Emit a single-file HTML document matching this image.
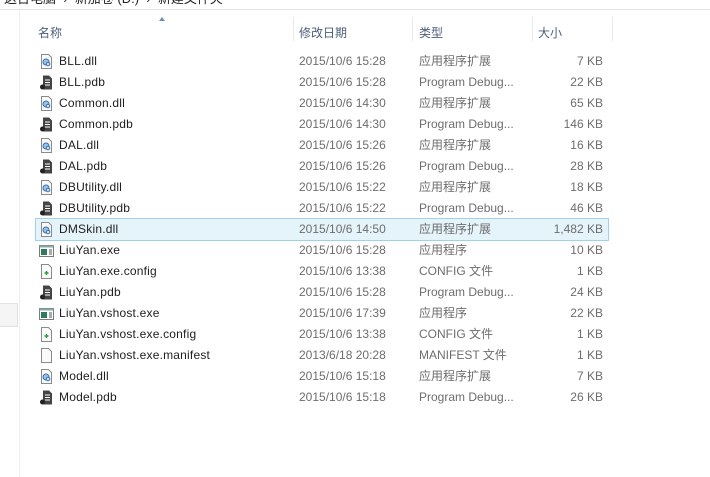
<!DOCTYPE html>
<html><head><meta charset="utf-8"><style>
body{margin:0;width:710px;height:477px;background:#fff;position:relative;overflow:hidden;font-family:"Liberation Sans","Noto Sans CJK SC",sans-serif;font-size:12px;}
.crumb{position:absolute;left:4px;top:-12px;color:#222;font-size:13px;white-space:nowrap}
.topline{position:absolute;left:0;top:9px;width:710px;height:1px;background:#e3e3e3}
.vline{position:absolute;left:19px;top:10px;width:1px;height:467px;background:#efefef}
.gbox{position:absolute;left:0;top:303px;width:17px;height:22px;background:#f5f5f5;border:1px solid #e2e2e2;border-left:none}
.h{position:absolute;top:24px;color:#4c607a;font-size:12px}
.sep{position:absolute;top:17px;width:1px;height:24px;background:#e5eaf0}
.r{position:absolute;left:0;height:21px;width:710px;line-height:21px}
.r span{position:absolute;white-space:nowrap}
.n{left:59px;color:#1e1e1e;letter-spacing:.2px}
.d{left:299px;color:#6d6d6d}
.t{left:419px;color:#6d6d6d}
.s{right:107px;color:#6d6d6d}
.ic{position:absolute;left:40px;top:3px;width:13px;height:15px}
.sel{position:absolute;left:35px;top:218px;width:572px;height:21px;background:#e5f3fb;border:1px solid #9fd0f0}
.arrow{position:absolute;left:159px;top:17px;width:0;height:0;border-left:3px solid transparent;border-right:3px solid transparent;border-bottom:4px solid #6d8fb0}
</style></head><body>
<div class="crumb">这台电脑 &nbsp;›&nbsp; 新加卷 (D:) &nbsp;›&nbsp; 新建文件夹</div>
<div class="topline"></div>
<div class="vline"></div>
<div class="gbox"></div>
<div class="arrow"></div>
<div class="h" style="left:38px">名称</div>
<div class="sep" style="left:293px"></div>
<div class="h" style="left:299px">修改日期</div>
<div class="sep" style="left:412px"></div>
<div class="h" style="left:419px">类型</div>
<div class="sep" style="left:532px"></div>
<div class="h" style="left:538px">大小</div>
<div class="sep" style="left:612px"></div>
<div class="sel"></div>

<svg width="0" height="0" style="position:absolute">
<defs>
<symbol id="dll" viewBox="0 0 13 15"><path d="M1.5 .5h7l3 3v11h-10z" fill="#fafafa" stroke="#8a8a8a"/><circle cx="6" cy="8" r="3" fill="#9cc3e6" stroke="#3a6fb0"/><circle cx="8" cy="10" r="1.8" fill="#c8dff3" stroke="#3a6fb0"/></symbol>
<symbol id="pdb" viewBox="0 0 13 15"><path d="M3 .5h6l3 3v11h-9z" fill="#444"/><path d="M5 5h5M5 7.5h5M5 10h5" stroke="#fff"/><circle cx="2.5" cy="12" r="2.5" fill="#222"/></symbol>
<symbol id="exe" viewBox="0 0 15 15"><rect x=".5" y="2.5" width="14" height="11" fill="#fff" stroke="#7a7a7a"/><rect x=".5" y="2.5" width="14" height="2" fill="#8aa"/><rect x="2" y="6" width="6" height="6" fill="#2f7a5a"/><path d="M10 7h3M10 9h3M10 11h3" stroke="#555"/></symbol>
<symbol id="cfg" viewBox="0 0 13 15"><path d="M1.5 .5h7l3 3v11h-10z" fill="#fafafa" stroke="#8a8a8a"/><path d="M6.5 7v4M4.5 9h4" stroke="#2a9a3a" stroke-width="1.4"/></symbol>
<symbol id="man" viewBox="0 0 13 15"><path d="M1.5 .5h7l3 3v11h-10z" fill="#fafafa" stroke="#8a8a8a"/></symbol>
</defs></svg>

<div class="r" style="top:51px"><svg class="ic"><use href="#dll"/></svg><span class="n">BLL.dll</span><span class="d">2015/10/6 15:28</span><span class="t">应用程序扩展</span><span class="s">7 KB</span></div>
<div class="r" style="top:72px"><svg class="ic"><use href="#pdb"/></svg><span class="n">BLL.pdb</span><span class="d">2015/10/6 15:28</span><span class="t">Program Debug...</span><span class="s">22 KB</span></div>
<div class="r" style="top:93px"><svg class="ic"><use href="#dll"/></svg><span class="n">Common.dll</span><span class="d">2015/10/6 14:30</span><span class="t">应用程序扩展</span><span class="s">65 KB</span></div>
<div class="r" style="top:114px"><svg class="ic"><use href="#pdb"/></svg><span class="n">Common.pdb</span><span class="d">2015/10/6 14:30</span><span class="t">Program Debug...</span><span class="s">146 KB</span></div>
<div class="r" style="top:135px"><svg class="ic"><use href="#dll"/></svg><span class="n">DAL.dll</span><span class="d">2015/10/6 15:26</span><span class="t">应用程序扩展</span><span class="s">16 KB</span></div>
<div class="r" style="top:156px"><svg class="ic"><use href="#pdb"/></svg><span class="n">DAL.pdb</span><span class="d">2015/10/6 15:26</span><span class="t">Program Debug...</span><span class="s">28 KB</span></div>
<div class="r" style="top:177px"><svg class="ic"><use href="#dll"/></svg><span class="n">DBUtility.dll</span><span class="d">2015/10/6 15:22</span><span class="t">应用程序扩展</span><span class="s">18 KB</span></div>
<div class="r" style="top:198px"><svg class="ic"><use href="#pdb"/></svg><span class="n">DBUtility.pdb</span><span class="d">2015/10/6 15:22</span><span class="t">Program Debug...</span><span class="s">46 KB</span></div>
<div class="r" style="top:219px"><svg class="ic"><use href="#dll"/></svg><span class="n">DMSkin.dll</span><span class="d">2015/10/6 14:50</span><span class="t">应用程序扩展</span><span class="s">1,482 KB</span></div>
<div class="r" style="top:240px"><svg class="ic" style="width:15px;left:39px"><use href="#exe"/></svg><span class="n">LiuYan.exe</span><span class="d">2015/10/6 15:28</span><span class="t">应用程序</span><span class="s">10 KB</span></div>
<div class="r" style="top:261px"><svg class="ic"><use href="#cfg"/></svg><span class="n">LiuYan.exe.config</span><span class="d">2015/10/6 13:38</span><span class="t">CONFIG 文件</span><span class="s">1 KB</span></div>
<div class="r" style="top:282px"><svg class="ic"><use href="#pdb"/></svg><span class="n">LiuYan.pdb</span><span class="d">2015/10/6 15:28</span><span class="t">Program Debug...</span><span class="s">24 KB</span></div>
<div class="r" style="top:303px"><svg class="ic" style="width:15px;left:39px"><use href="#exe"/></svg><span class="n">LiuYan.vshost.exe</span><span class="d">2015/10/6 17:39</span><span class="t">应用程序</span><span class="s">22 KB</span></div>
<div class="r" style="top:324px"><svg class="ic"><use href="#cfg"/></svg><span class="n">LiuYan.vshost.exe.config</span><span class="d">2015/10/6 13:38</span><span class="t">CONFIG 文件</span><span class="s">1 KB</span></div>
<div class="r" style="top:345px"><svg class="ic"><use href="#man"/></svg><span class="n">LiuYan.vshost.exe.manifest</span><span class="d">2013/6/18 20:28</span><span class="t">MANIFEST 文件</span><span class="s">1 KB</span></div>
<div class="r" style="top:366px"><svg class="ic"><use href="#dll"/></svg><span class="n">Model.dll</span><span class="d">2015/10/6 15:18</span><span class="t">应用程序扩展</span><span class="s">7 KB</span></div>
<div class="r" style="top:387px"><svg class="ic"><use href="#pdb"/></svg><span class="n">Model.pdb</span><span class="d">2015/10/6 15:18</span><span class="t">Program Debug...</span><span class="s">26 KB</span></div>
</body></html>
